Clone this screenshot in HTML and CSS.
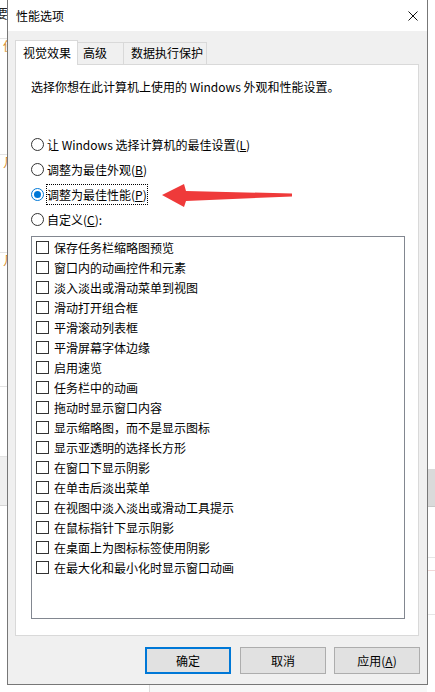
FILE: index.html
```html
<!DOCTYPE html>
<html lang="zh-CN">
<head>
<meta charset="utf-8">
<title>性能选项</title>
<link rel="stylesheet" href="styles.css">
</head>
<body>
<div class="desktop">
  <div class="bg-left">
    <div class="bl-top"><span class="peek">要</span></div>
    <div class="bl-row bl-r1"><span class="peek-o">使</span></div>
    <div class="bl-row bl-r2"><span class="peek-o">几</span></div>
    <div class="bl-row bl-r3"><span class="peek-o">几</span></div>
    <div class="bl-row bl-r4"></div>
    <div class="bl-band"></div>
  </div>
  <div class="bg-mid">
    <div class="bm-space"></div>
    <div class="bm-bottom"><div class="bm-white"></div><div class="bm-gray"></div></div>
  </div>
  <div class="bg-right">
    <div class="br-space"></div>
    <div class="br-band"></div>
    <div class="br-row br-r1"></div>
    <div class="br-row br-r2"></div>
    <div class="br-row br-r3"></div>
  </div>
</div>

<div class="window">
  <div class="titlebar">
    <span class="title">性能选项</span>
    <svg class="close" width="10" height="10" viewBox="0 0 10 10"><path d="M0.5 0.5 L9.5 9.5 M9.5 0.5 L0.5 9.5" stroke="#111" stroke-width="1" fill="none"/></svg>
  </div>
  <div class="wbody">
    <div class="tabs">
      <div class="tab tab-active">视觉效果</div>
      <div class="tab tab-2">高级</div>
      <div class="tab tab-3">数据执行保护</div>
    </div>
    <div class="panel">
      <p class="desc">选择你想在此计算机上使用的 Windows 外观和性能设置。</p>
      <div class="radios">
        <div class="radio"><span class="rc"></span><span class="rl">让 Windows 选择计算机的最佳设置(<u>L</u>)</span></div>
        <div class="radio"><span class="rc"></span><span class="rl">调整为最佳外观(<u>B</u>)</span></div>
        <div class="radio"><span class="rc rc-on"><span class="dot"></span></span><span class="rl rl-focus">调整为最佳性能(<u>P</u>)</span></div>
        <div class="radio"><span class="rc"></span><span class="rl">自定义(<u>C</u>):</span></div>
      </div>
      <div class="listbox">
        <div class="item"><span class="cb"></span>保存任务栏缩略图预览</div>
        <div class="item"><span class="cb"></span>窗口内的动画控件和元素</div>
        <div class="item"><span class="cb"></span>淡入淡出或滑动菜单到视图</div>
        <div class="item"><span class="cb"></span>滑动打开组合框</div>
        <div class="item"><span class="cb"></span>平滑滚动列表框</div>
        <div class="item"><span class="cb"></span>平滑屏幕字体边缘</div>
        <div class="item"><span class="cb"></span>启用速览</div>
        <div class="item"><span class="cb"></span>任务栏中的动画</div>
        <div class="item"><span class="cb"></span>拖动时显示窗口内容</div>
        <div class="item"><span class="cb"></span>显示缩略图，而不是显示图标</div>
        <div class="item"><span class="cb"></span>显示亚透明的选择长方形</div>
        <div class="item"><span class="cb"></span>在窗口下显示阴影</div>
        <div class="item"><span class="cb"></span>在单击后淡出菜单</div>
        <div class="item"><span class="cb"></span>在视图中淡入淡出或滑动工具提示</div>
        <div class="item"><span class="cb"></span>在鼠标指针下显示阴影</div>
        <div class="item"><span class="cb"></span>在桌面上为图标标签使用阴影</div>
        <div class="item"><span class="cb"></span>在最大化和最小化时显示窗口动画</div>
      </div>
    </div>
    <div class="buttons">
      <button class="btn btn-default">确定</button>
      <button class="btn">取消</button>
      <button class="btn">应用(<u>A</u>)</button>
    </div>
  </div>
</div>

<svg class="arrow" width="135" height="28" viewBox="160 182 135 28">
  <polygon points="162,195 184,184 186,191 292,193.5 292,196.5 186,201 184,207" fill="#ef3a3a"/>
</svg>
</body>
</html>
```

FILE: styles.css
```css
* { box-sizing: border-box; }
html, body { margin: 0; padding: 0; }
body {
  width: 435px;
  height: 692px;
  overflow: hidden;
  position: relative;
  background: #fff;
  font-family: "Noto Sans CJK SC", "Noto Sans", sans-serif;
  font-size: 12px;
  color: #000;
}

/* background desktop slivers */
.desktop {
  display: grid;
  grid-template-columns: 7px 1fr 8px;
  height: 692px;
}
.bg-left, .bg-right, .bg-mid { overflow: hidden; display: flex; flex-direction: column; }
.bl-top { height: 39px; border-bottom: 1px solid #e3e3e3; }
.peek { display: block; margin-left: -5px; margin-top: 5px; font-size: 13px; line-height: 16px; color: #222; }
.peek-o { display: block; margin-left: 3px; font-size: 12px; line-height: 14px; color: #d58a2a; }
.bl-row { border-bottom: 1px solid #e3e3e3; }
.bl-r1 { height: 116px; padding-top: 0; }
.bl-r2 { height: 98px; }
.bl-r3 { height: 134px; }
.bl-r4 { height: 70px; }
.bl-band { height: 49px; background: #efefef; border-bottom: 1px solid #d6d6d6; }
.bm-space { flex: 1; }
.bm-bottom { height: 7px; display: flex; }
.bm-white { width: 143px; background: #fff; border-right: 1px solid #dcdcdc; }
.bm-gray { flex: 1; background: #f7f7f7; }
.br-space { height: 469px; }
.br-band { height: 38px; background: #dadada; border-bottom: 1px solid #c8c8c8; }
.br-row { border-bottom: 1px solid #e6e6e6; }
.br-r1 { height: 51px; }
.br-r2 { height: 13px; border-bottom-color: #f0d8d8; }
.br-r3 { height: 44px; }

/* dialog window */
.window {
  position: absolute;
  left: 7px;
  top: -1px;
  width: 421px;
  height: 686px;
  border: 1px solid #777;
  background: #f0f0f0;
  display: flex;
  flex-direction: column;
}
.titlebar {
  height: 31px;
  background: #fff;
  display: flex;
  align-items: center;
  padding-left: 8px;
  padding-right: 9px;
}
.title { line-height: 16px; }
.close { margin-left: auto; display: block; }

.wbody {
  flex: 1;
  padding: 9px 8px 0 7px;
  display: flex;
  flex-direction: column;
}
.tabs {
  height: 24px;
  display: flex;
  align-items: flex-start;
}
.tab {
  border: 1px solid #d9d9d9;
  border-bottom: none;
  white-space: nowrap;
}
.tab-active {
  width: 63px;
  height: 25px;
  line-height: 23px;
  padding-left: 7px;
  background: #fff;
  position: relative;
  z-index: 1;
}
.tab-2, .tab-3 {
  margin-top: 2px;
  height: 22px;
  line-height: 20px;
  border-left: none;
  background: #f0f0f0;
}
.tab-2 { width: 46px; padding-left: 5px; }
.tab-3 { width: 83px; padding-left: 7px; }

.panel {
  width: 404px;
  height: 572px;
  background: #fff;
  border: 1px solid #d9d9d9;
  padding-top: 12px;
}
.desc {
  margin: 0 0 0 15px;
  line-height: 20px;
  height: 20px;
}
.radios {
  margin-top: 35px;
  margin-left: 15px;
}
.radio {
  height: 25px;
  display: flex;
  align-items: center;
}
.rc {
  width: 13px;
  height: 13px;
  border: 1px solid #333;
  border-radius: 50%;
  background: #fff;
  margin-right: 2px;
  display: flex;
  align-items: center;
  justify-content: center;
}
.rc-on { border-color: #0078d7; }
.dot { width: 7px; height: 7px; border-radius: 50%; background: #0078d7; }
.rl {
  border: 1px dotted transparent;
  height: 21px;
  line-height: 19px;
  white-space: nowrap;
}
.rl-focus { border-color: #000; }

.listbox {
  margin: 4px 0 0 15px;
  width: 374px;
  height: 383px;
  border: 1px solid #828790;
  background: #fff;
}
.item {
  height: 20px;
  display: flex;
  align-items: center;
  padding-left: 4px;
  white-space: nowrap;
}
.cb {
  width: 13px;
  height: 13px;
  border: 1px solid #333;
  background: #fff;
  margin-right: 5px;
  flex: none;
}

.buttons {
  margin-top: 11px;
  margin-right: -1px;
  display: flex;
  justify-content: flex-end;
  gap: 8px;
}
.btn {
  width: 86px;
  height: 27px;
  background: #e1e1e1;
  border: 1px solid #adadad;
  font-family: "Noto Sans CJK SC", "Noto Sans", sans-serif;
  font-size: 12px;
  color: #000;
  padding: 0;
  line-height: 16px;
}
.btn-default {
  border: 2px solid #0078d7;
  margin-right: 1px;
}

.arrow {
  position: absolute;
  left: 160px;
  top: 182px;
  pointer-events: none;
}
```
